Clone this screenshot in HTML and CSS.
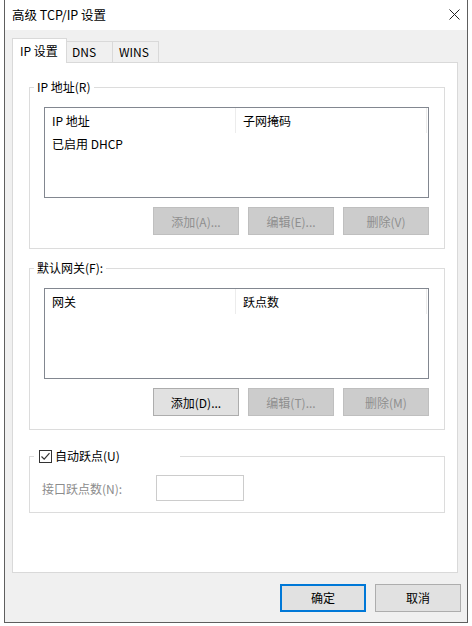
FILE: index.html
```html
<!DOCTYPE html>
<html lang="zh-CN">
    <head>
        <meta charset="UTF-8" />
        <meta name="viewport" content="width=device-width, initial-scale=1.0" />
        <title>高级 TCP/IP 设置</title>
        <link rel="stylesheet" href="styles.css">
    </head>
    <body>
        <div class="window">
            <div class="titlebar">
                <span class="title">高级 TCP/IP 设置</span>
                <svg class="close" width="11" height="11" viewBox="0 0 11 11">
                    <path d="M0.5 0.5 L10.5 10.5 M10.5 0.5 L0.5 10.5" stroke="#222" stroke-width="1" fill="none" />
                </svg>
            </div>

            <div class="content">
                <div class="tabs">
                    <div class="tab tab-active">IP 设置</div>
                    <div class="tab tab-dns">DNS</div>
                    <div class="tab tab-wins">WINS</div>
                </div>

                <div class="panel">
                    <fieldset class="group">
                        <legend>IP 地址(R)</legend>
                        <div class="listbox">
                            <div class="list-head">
                                <div class="col">IP 地址</div>
                                <div class="col">子网掩码</div>
                            </div>
                            <div class="list-row">已启用 DHCP</div>
                        </div>
                        <div class="btn-row">
                            <button class="btn" disabled>添加(A)...</button>
                            <button class="btn" disabled>编辑(E)...</button>
                            <button class="btn" disabled>删除(V)</button>
                        </div>
                    </fieldset>

                    <fieldset class="group group-gw">
                        <legend>默认网关(F):</legend>
                        <div class="listbox">
                            <div class="list-head">
                                <div class="col">网关</div>
                                <div class="col">跃点数</div>
                            </div>
                        </div>
                        <div class="btn-row">
                            <button class="btn">添加(D)...</button>
                            <button class="btn" disabled>编辑(T)...</button>
                            <button class="btn" disabled>删除(M)</button>
                        </div>
                    </fieldset>

                    <fieldset class="group group-metric">
                        <legend class="check-legend">
                            <svg class="checkbox" width="13" height="13" viewBox="0 0 13 13">
                                <rect x="0.5" y="0.5" width="12" height="12" fill="#fff" stroke="#333" />
                                <path d="M2.5 6.5 L5.2 9.2 L10.5 3.2" stroke="#333" stroke-width="1.2" fill="none" />
                            </svg>
                            <span>自动跃点(U)</span>
                        </legend>
                        <div class="metric-row">
                            <span class="metric-label">接口跃点数(N):</span>
                            <div class="input"></div>
                        </div>
                    </fieldset>
                </div>
            </div>

            <div class="footer">
                <button class="btn btn-default">确定</button>
                <button class="btn">取消</button>
            </div>
        </div>
    </body>
</html>
```

FILE: styles.css
```css
* {
    box-sizing: border-box;
}

body {
    margin: 0;
    background-color: #fff;
    font-family: "Noto Sans CJK SC", "Microsoft YaHei", sans-serif;
    font-size: 12px;
    color: #000;
}

.window {
    margin-left: 4px;
    width: 464px;
    height: 623px;
    border: 1px solid #5e5e5e;
    border-top: none;
    background-color: #f0f0f0;
    display: flex;
    flex-direction: column;
}

.titlebar {
    height: 30px;
    background-color: #fff;
    display: flex;
    align-items: center;
    justify-content: space-between;
    padding-left: 7px;
    padding-right: 7px;
}

.title {
    line-height: 16px;
    font-size: 12.5px;
}

.close {
    display: block;
    margin-top: -1px;
}

.content {
    padding: 9px 9px 0 7px;
}

.tabs {
    display: flex;
    align-items: flex-end;
    height: 24px;
    margin-bottom: -1px;
    position: relative;
    z-index: 1;
}

.tab {
    height: 21px;
    line-height: 20px;
    border: 1px solid #d9d9d9;
    border-bottom: none;
    border-left: none;
    background-color: #f0f0f0;
    margin-bottom: 1px;
}

.tab-active {
    height: 25px;
    width: 55px;
    padding-top: 2px;
    padding-left: 7px;
    border-left: 1px solid #d9d9d9;
    background-color: #fff;
    margin-bottom: 0;
}

.tab-dns {
    width: 46px;
    padding-left: 5px;
}

.tab-wins {
    width: 46px;
    padding-left: 6px;
}

.panel {
    height: 511px;
    background-color: #fff;
    border: 1px solid #d9d9d9;
    padding: 16px 12px 0 16px;
}

.group {
    margin: 0;
    border: 1px solid #dcdcdc;
    padding: 12px 15px 13px 4px;
    min-width: 0;
}

.group legend {
    padding: 0 3px;
    line-height: 16px;
}

.group-gw {
    margin-top: 11px;
}

.group-metric {
    margin-top: 18px;
    padding-top: 11px;
    padding-bottom: 11px;
}

.listbox {
    margin-left: 10px;
    height: 91px;
    border: 1px solid #828790;
    background-color: #fff;
}

.list-head {
    display: flex;
    height: 25px;
}

.col {
    width: 191px;
    line-height: 25px;
    padding-left: 7px;
    border-right: 1px solid #ececec;
}

.list-row {
    line-height: 22px;
    padding-left: 7px;
}

.btn-row {
    display: flex;
    justify-content: flex-end;
    gap: 9px;
    margin-top: 9px;
}

.btn {
    width: 86px;
    height: 28px;
    padding: 0;
    border: 1px solid #adadad;
    background-color: #e1e1e1;
    font-family: inherit;
    font-size: 12px;
    color: #000;
}

.btn:disabled {
    background-color: #cccccc;
    border-color: #bfbfbf;
    color: #8f8f8f;
}

.btn-default {
    border-color: #0078d7;
    box-shadow: inset 0 0 0 1px #0078d7;
}

.check-legend {
    width: 146px;
    display: flex;
    align-items: center;
    gap: 3px;
}

.group .check-legend {
    padding-left: 5px;
}

.checkbox {
    display: block;
}

.metric-row {
    display: flex;
    align-items: center;
    margin-left: 8px;
}

.metric-label {
    width: 114px;
    color: #8c8c8c;
}

.input {
    width: 88px;
    height: 26px;
    border: 1px solid #cccccc;
    background-color: #fff;
}

.footer {
    flex: 1;
    display: flex;
    justify-content: flex-end;
    align-items: center;
    gap: 9px;
    padding-right: 6px;
}
```
